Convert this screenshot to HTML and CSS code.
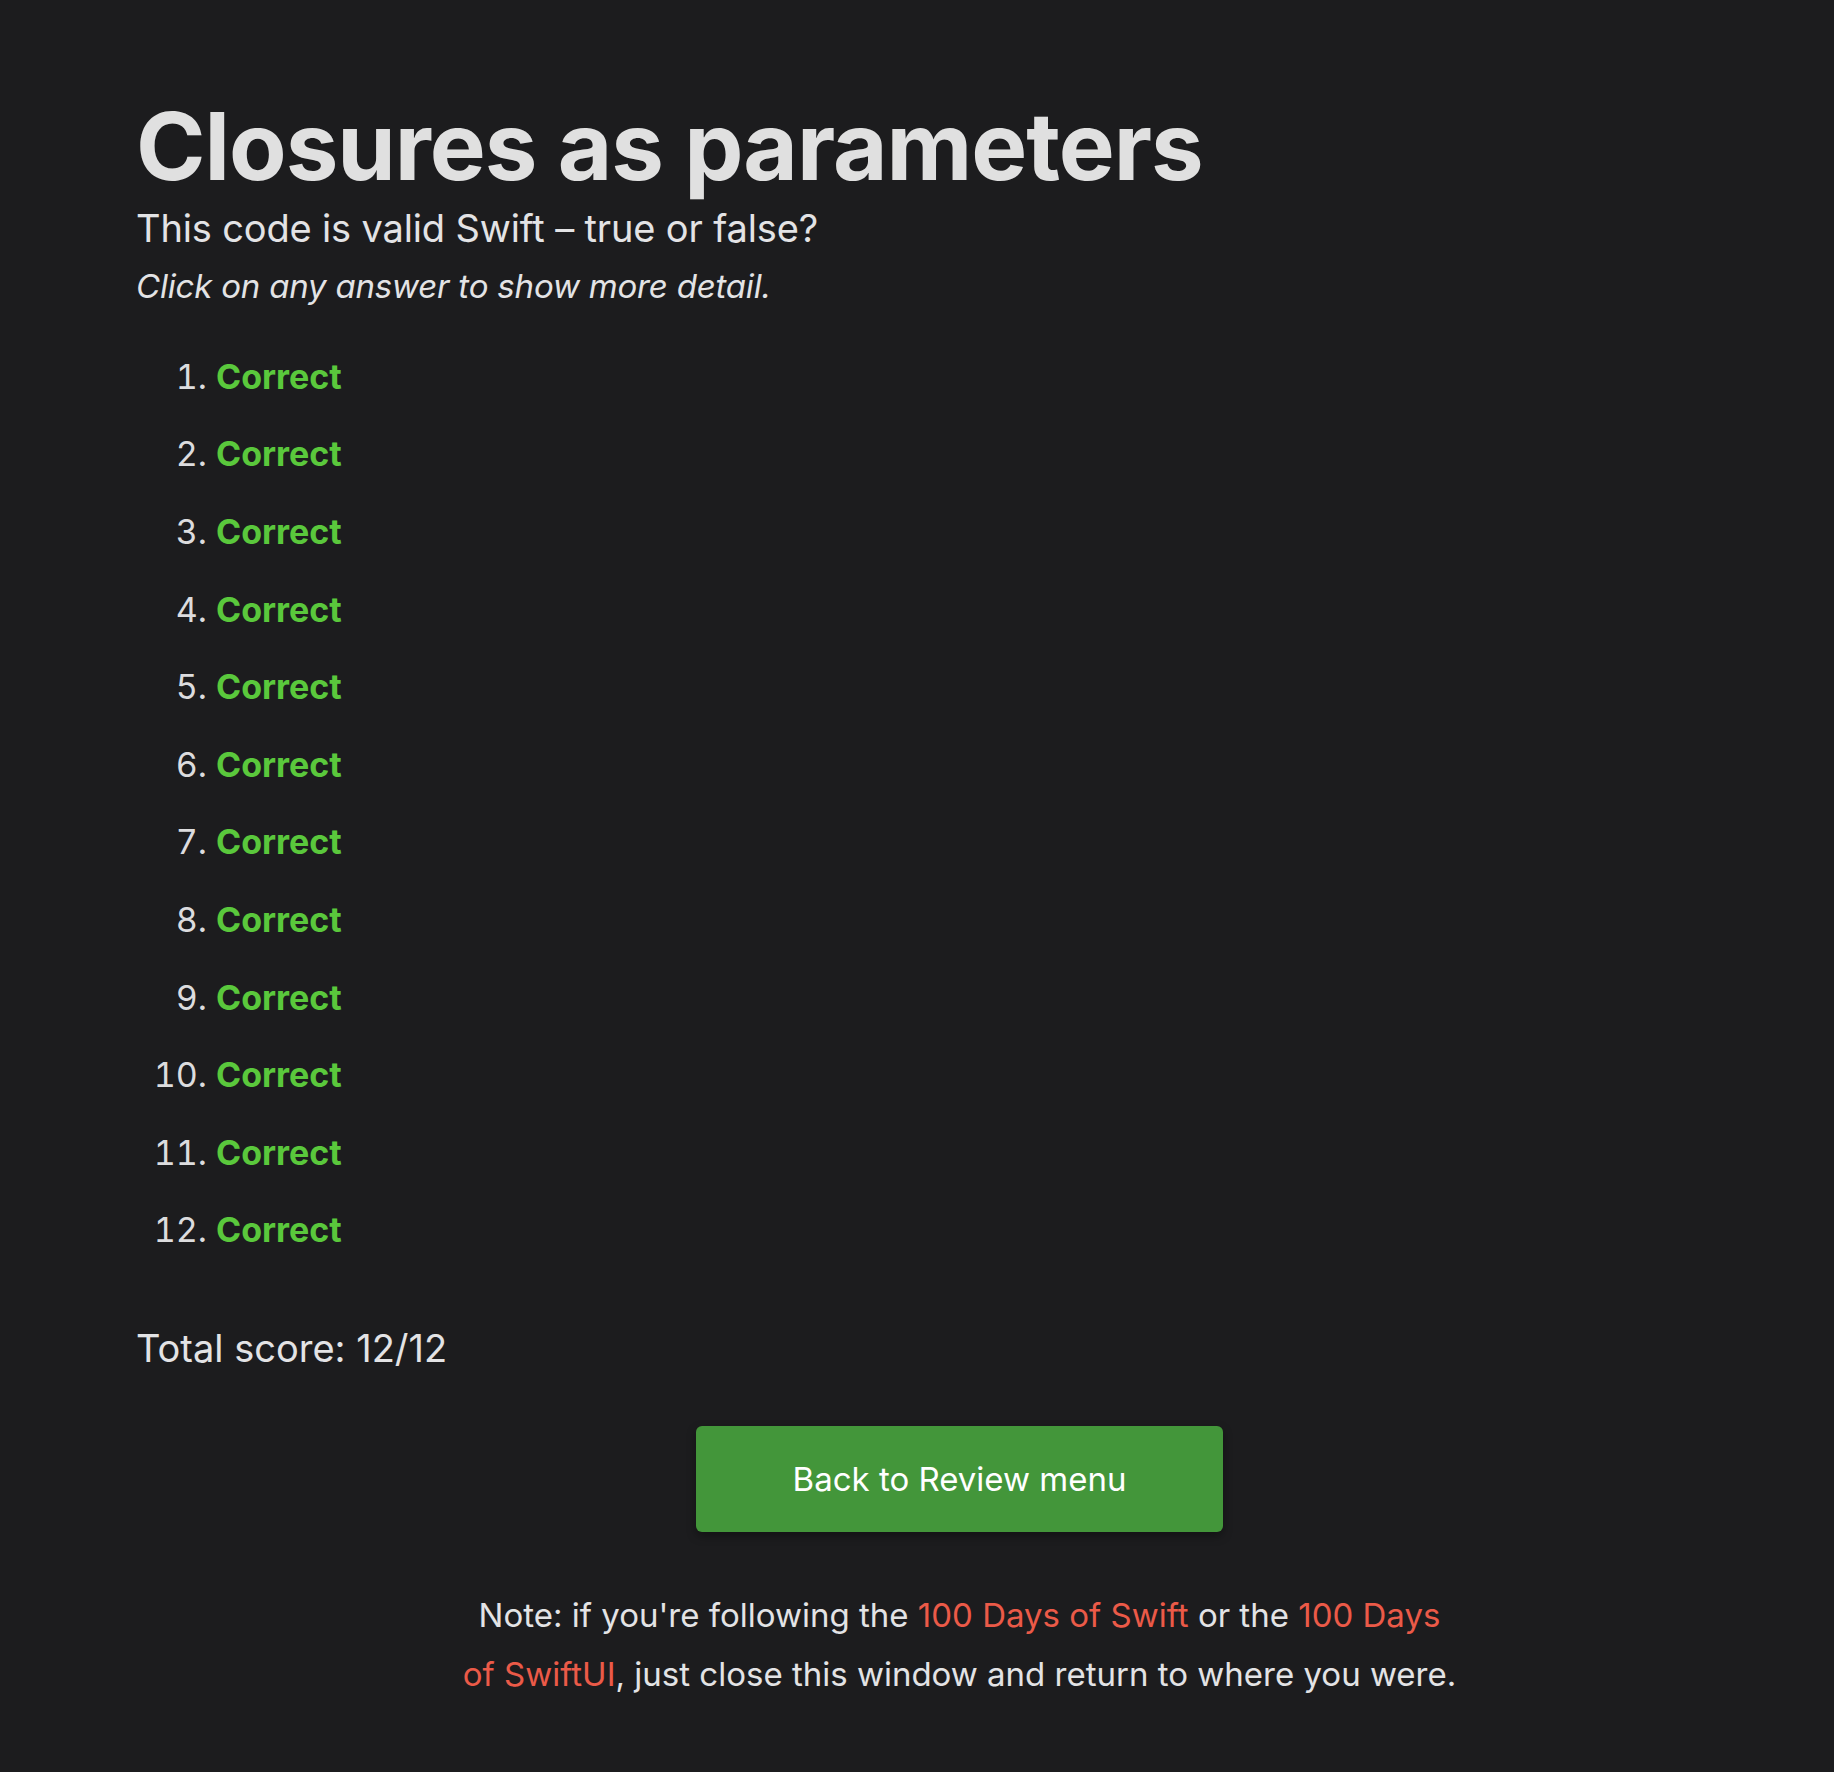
FILE: index.html
```html
<!DOCTYPE html>
<html lang="en">
<head>
<meta charset="utf-8">
<title>Closures as parameters</title>
<link rel="stylesheet" href="styles.css">
</head>
<body>
<main class="page">
  <h1 class="title">Closures as parameters</h1>
  <p class="subtitle">This code is valid Swift – true or false?</p>
  <p class="hint">Click on any answer to show more detail.</p>
  <ol class="answers">
    <li><span class="correct">Correct</span></li>
    <li><span class="correct">Correct</span></li>
    <li><span class="correct">Correct</span></li>
    <li><span class="correct">Correct</span></li>
    <li><span class="correct">Correct</span></li>
    <li><span class="correct">Correct</span></li>
    <li><span class="correct">Correct</span></li>
    <li><span class="correct">Correct</span></li>
    <li><span class="correct">Correct</span></li>
    <li><span class="correct">Correct</span></li>
    <li><span class="correct">Correct</span></li>
    <li><span class="correct">Correct</span></li>
  </ol>
  <p class="score">Total score: 12/12</p>
  <div class="actions">
    <a class="button" href="#">Back to Review menu</a>
  </div>
  <p class="note">Note: if you're following the <a class="link" href="#">100 Days of Swift</a> or the <a class="link" href="#">100 Days of SwiftUI</a>, just close this window and return to where you were.</p>
</main>
</body>
</html>
```

FILE: styles.css
```css
html, body {
  margin: 0;
  padding: 0;
  background: #1c1c1e;
}

body {
  font-family: Inter, "Noto Sans", "Liberation Sans", sans-serif;
  color: #e3e3e5;
}

.page {
  padding: 95px 51px 60px 136px;
}

.title {
  margin: 0;
  font-size: 94px;
  font-weight: 700;
  line-height: 1.1;
  letter-spacing: -1px;
  color: #e0e0e0;
}

.subtitle {
  margin: 4px 0 0;
  font-size: 38px;
  line-height: 1.4;
  letter-spacing: -0.15px;
}

.hint {
  margin: 7px 0 0;
  font-size: 33px;
  font-style: italic;
  line-height: 1.4;
  letter-spacing: -0.2px;
}

.answers {
  margin: 29px 0 0;
  padding-left: 80px;
  font-size: 34px;
}

.answers li {
  line-height: 77.6px;
}

.answers li::marker {
  color: #dcdcde;
}

.correct {
  color: #5ac83c;
  font-weight: 700;
}

.score {
  margin: 53px 0 0;
  font-size: 38px;
  line-height: 1.4;
}

.actions {
  display: flex;
  justify-content: center;
  margin-top: 51px;
}

.button {
  display: flex;
  align-items: center;
  justify-content: center;
  width: 527px;
  height: 106px;
  background: #43963a;
  color: #ffffff;
  border-radius: 6px;
  font-size: 33px;
  text-decoration: none;
  box-shadow: 0 4px 10px rgba(0, 0, 0, 0.35);
}

.note {
  max-width: 998px;
  margin: 54px auto 0;
  text-align: center;
  font-size: 33px;
  line-height: 58.5px;
}

.link {
  color: #eb5a48;
  text-decoration: none;
}
```
